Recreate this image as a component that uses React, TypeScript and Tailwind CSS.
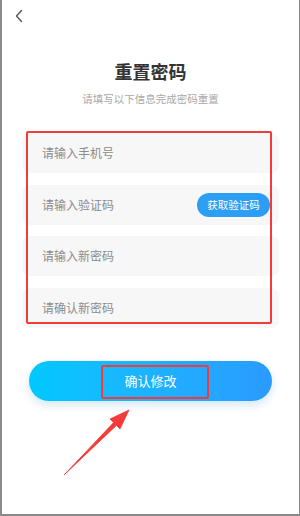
import React from "react";

const font = { fontFamily: '"Noto Sans CJK SC", "Noto Sans", sans-serif' };

function Row({ text, children }: { text: string; children?: React.ReactNode }) {
  return (
    <div className="h-[40px] rounded-[8px] bg-[#f7f7f7] flex items-center justify-between pl-[20px] pr-[12px]">
      <span className="text-[12px] leading-none text-[#8c8c8c]">{text}</span>
      {children}
    </div>
  );
}

export default function App() {
  return (
    <div className="relative w-[300px] h-[516px] bg-white border-l-2 border-r border-b-2 border-[#8a8a8a] overflow-hidden" style={font}>
      <div className="flex flex-col">
        <div className="h-[30px] pl-[12px] pt-[9px]">
          <svg width="10" height="14" viewBox="0 0 10 14" fill="none">
            <path d="M7.5 1.5 L2.5 7 L7.5 12.5" stroke="#555" strokeWidth="1.4" strokeLinecap="round" strokeLinejoin="round" />
          </svg>
        </div>
        <div className="mt-[30px] text-center text-[18px] font-bold leading-[22px] text-[#333]">重置密码</div>
        <div className="mt-[11px] text-center text-[10.5px] leading-[12px] text-[#a8a8a8]">请填写以下信息完成密码重置</div>
        <div className="mt-[28px] px-[20px] flex flex-col gap-[11.5px]">
          <Row text="请输入手机号" />
          <Row text="请输入验证码">
            <div className="h-[24px] w-[73px] -mr-[3px] rounded-full bg-[#2c9ff5] flex items-center justify-center text-[10.5px] text-white">获取验证码</div>
          </Row>
          <Row text="请输入新密码" />
          <Row text="请确认新密码" />
        </div>
        <div className="mt-[33px] mx-[27px] h-[40px] rounded-full bg-gradient-to-r from-[#00c8ff] to-[#2a9bff] shadow-[0_4px_10px_rgba(0,120,200,0.18)] flex items-center justify-center text-[13px] text-white">
          确认修改
        </div>
      </div>

      <div className="absolute left-[24px] top-[131px] w-[246px] h-[193px] border-2 border-[#f43b3b] rounded-[2px]" />
      <div className="absolute left-[99px] top-[365px] w-[108px] h-[34px] border-2 border-[#f43b3b] rounded-[2px]" />
      <svg className="absolute left-0 top-0" width="300" height="516" viewBox="0 0 300 516">
        <path d="M62 475 L111.6 422.6 L108 419 L127 410 L118 429 L114.4 425.4 Z" fill="#f43b3b" stroke="#f43b3b" strokeWidth="0.8" strokeLinejoin="round" />
      </svg>
    </div>
  );
}
